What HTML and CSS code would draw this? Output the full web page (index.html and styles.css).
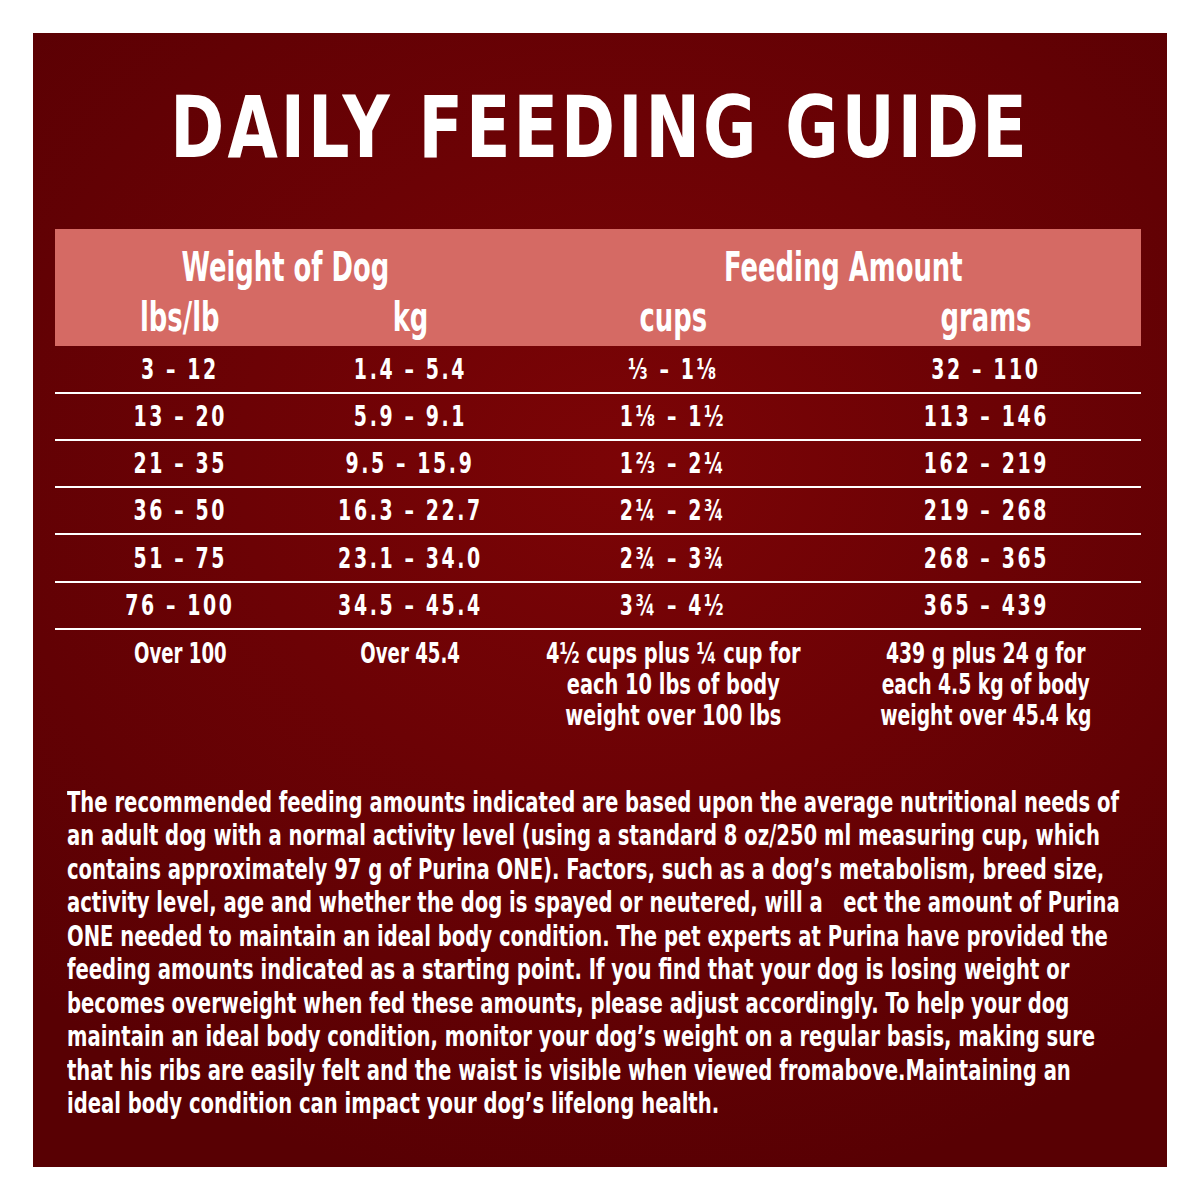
FILE: index.html
```html
<!DOCTYPE html>
<html>
<head>
<meta charset="utf-8">
<link rel="stylesheet" href="styles.css">
</head>
<body>
<div class="panel">
  <h1 class="title"><span class="sx">DAILY FEEDING GUIDE</span></h1>
  <div class="table">
    <div class="head">
      <div class="hcell group span2"><span class="sx">Weight of Dog</span></div>
      <div class="hcell group span2 feed"><span class="sx">Feeding Amount</span></div>
      <div class="hcell sub"><span class="sx">lbs/lb</span></div>
      <div class="hcell sub"><span class="sx">kg</span></div>
      <div class="hcell sub"><span class="sx">cups</span></div>
      <div class="hcell sub"><span class="sx">grams</span></div>
    </div>
    <div class="row first"><div><span class="sx">3 – 12</span></div><div><span class="sx">1.4 – 5.4</span></div><div><span class="sx">⅓ – 1⅛</span></div><div><span class="sx">32 – 110</span></div></div>
    <div class="row"><div><span class="sx">13 – 20</span></div><div><span class="sx">5.9 – 9.1</span></div><div><span class="sx">1⅛ – 1½</span></div><div><span class="sx">113 – 146</span></div></div>
    <div class="row"><div><span class="sx">21 – 35</span></div><div><span class="sx">9.5 – 15.9</span></div><div><span class="sx">1⅔ – 2¼</span></div><div><span class="sx">162 – 219</span></div></div>
    <div class="row"><div><span class="sx">36 – 50</span></div><div><span class="sx">16.3 – 22.7</span></div><div><span class="sx">2¼ – 2¾</span></div><div><span class="sx">219 – 268</span></div></div>
    <div class="row tall"><div><span class="sx">51 – 75</span></div><div><span class="sx">23.1 – 34.0</span></div><div><span class="sx">2¾ – 3¾</span></div><div><span class="sx">268 – 365</span></div></div>
    <div class="row"><div><span class="sx">76 – 100</span></div><div><span class="sx">34.5 – 45.4</span></div><div><span class="sx">3¾ – 4½</span></div><div><span class="sx">365 – 439</span></div></div>
    <div class="row last">
      <div><span class="sx">Over 100</span></div>
      <div><span class="sx">Over 45.4</span></div>
      <div><span class="sx c3">4½ cups plus ¼ cup for<br>each 10 lbs of body<br>weight over 100 lbs</span></div>
      <div><span class="sx c4">439 g plus 24 g for<br>each 4.5 kg of body<br>weight over 45.4 kg</span></div>
    </div>
  </div>
  <p class="note">The recommended feeding amounts indicated are based upon the average nutritional needs of<br>an adult dog with a normal activity level (using a standard 8 oz/250 ml measuring cup, which<br>contains approximately 97 g of Purina ONE). Factors, such as a dog’s metabolism, breed size,<br>activity level, age and whether the dog is spayed or neutered, will a&nbsp;&nbsp; ect the amount of Purina<br>ONE needed to maintain an ideal body condition. The pet experts at Purina have provided the<br>feeding amounts indicated as a starting point. If you find that your dog is losing weight or<br>becomes overweight when fed these amounts, please adjust accordingly. To help your dog<br>maintain an ideal body condition, monitor your dog’s weight on a regular basis, making sure<br>that his ribs are easily felt and the waist is visible when viewed fromabove.Maintaining an<br>ideal body condition can impact your dog’s lifelong health.</p>
</div>
</body>
</html>
```

FILE: styles.css
```css
html, body {
  margin: 0;
  padding: 0;
  background: #ffffff;
}
body {
  width: 1200px;
  height: 1200px;
  padding: 33px;
  box-sizing: border-box;
}
.panel {
  width: 1134px;
  height: 1134px;
  box-sizing: border-box;
  padding: 0 22px 0 22px;
  background:
    radial-gradient(ellipse 75% 65% at 52% 38%, #7c0406 0%, #6c0205 45%, #580003 100%);
  color: #ffffff;
  font-family: "DejaVu Sans Condensed", "DejaVu Sans", sans-serif;
  font-weight: bold;
  overflow: hidden;
}
.sx {
  display: inline-block;
  white-space: nowrap;
  transform-origin: center top;
}
.title {
  margin: 0;
  padding-top: 52px;
  height: 144px;
  box-sizing: border-box;
  font-family: "DejaVu Sans", sans-serif;
  font-weight: bold;
  font-size: 85px;
  line-height: 86px;
  letter-spacing: 4px;
  display: flex;
  justify-content: center;
}
.title .sx { transform: scaleX(0.766); }
.table {
  margin-top: 52px;
  width: 1086px;
}
.head {
  display: grid;
  grid-template-columns: 250px 210px 316px 310px;
  background: #d56a64;
  height: 117px;
  padding-top: 14px;
  box-sizing: border-box;
}
.hcell {
  display: flex;
  justify-content: center;
  font-size: 41px;
  line-height: 48px;
}
.hcell.sub { margin-top: -4px; }
.hcell .sx { transform: scaleX(0.7); }
.span2 { grid-column: span 2; }
.feed { padding-left: 30px; }
.row {
  display: grid;
  grid-template-columns: 250px 210px 316px 310px;
  height: 47px;
  align-items: center;
  border-bottom: 2px solid #ffffff;
  box-sizing: border-box;
  font-size: 28px;
  letter-spacing: 3.5px;
}
.row.first, .row.tall { height: 48px; }
.row > div {
  display: flex;
  justify-content: center;
}
.row .sx {
  transform: scaleX(0.75);
  transform-origin: center center;
}
.row.last {
  border-bottom: none;
  height: auto;
  align-items: start;
  padding-top: 8px;
  font-size: 28px;
  line-height: 31px;
  letter-spacing: 0;
}
.row.last .sx {
  text-align: center;
  transform: scaleX(0.72);
}
.row.last .sx.c3 { transform: scaleX(0.77); }
.row.last .sx.c4 { transform: scaleX(0.745); }
.note {
  margin: 55px 0 0 12px;
  font-size: 28px;
  line-height: 33.45px;
  white-space: nowrap;
  transform: scaleX(0.778);
  transform-origin: left top;
}
```
